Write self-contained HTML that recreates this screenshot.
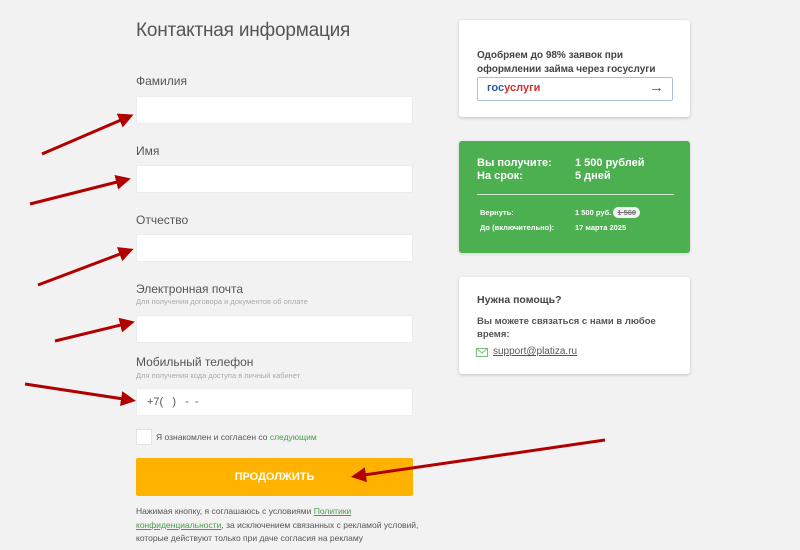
<!DOCTYPE html>
<html><head><meta charset="utf-8"><style>
*{margin:0;padding:0;box-sizing:border-box}
body{width:800px;height:550px;background:#f2f2f2;font-family:"Liberation Sans",sans-serif;color:#555;position:relative;overflow:hidden}
.a{position:absolute;white-space:nowrap}
.lbl{font-size:12px;color:#555}
.sub{font-size:7.5px;color:#aaa}
.in{position:absolute;left:136px;width:277px;height:28px;background:#fff;border:1px solid #ececec;border-radius:2px}
.card{position:absolute;left:459px;width:231px;background:#fff;border-radius:3px;box-shadow:0 1px 3px rgba(0,0,0,.2)}
</style></head><body>
<div class="a" style="left:136px;top:20px;font-size:19px;color:#555;letter-spacing:-0.2px">Контактная информация</div>
<div class="a lbl" style="left:136px;top:74px">Фамилия</div>
<div class="in" style="top:96px"></div>
<div class="a lbl" style="left:136px;top:144px">Имя</div>
<div class="in" style="top:165px"></div>
<div class="a lbl" style="left:136px;top:213px">Отчество</div>
<div class="in" style="top:234px"></div>
<div class="a lbl" style="left:136px;top:282px">Электронная почта</div>
<div class="a sub" style="left:136px;top:297px">Для получения договора и документов об оплате</div>
<div class="in" style="top:315px"></div>
<div class="a lbl" style="left:136px;top:355px">Мобильный телефон</div>
<div class="a sub" style="left:136px;top:371px">Для получения кода доступа в личный кабинет</div>
<div class="in" style="top:388px"></div>
<div class="a" style="left:147px;top:396px;font-size:11px;color:#555">+7(&nbsp;&nbsp;&nbsp;)&nbsp;&nbsp;&nbsp;-&nbsp;&nbsp;-</div>
<div class="a" style="left:136px;top:429px;width:16px;height:16px;background:#fff;border:1px solid #e4e4e4"></div>
<div class="a" style="left:156px;top:432px;font-size:8.5px;color:#555">Я ознакомлен и согласен со <span style="color:#4a9a4a">следующим</span></div>
<div class="a" style="left:136px;top:458px;width:277px;height:38px;background:#ffb300;border-radius:2px;color:#fff;font-weight:bold;font-size:11px;text-align:center;line-height:38px">ПРОДОЛЖИТЬ</div>
<div class="a" style="left:136px;top:505px;font-size:8.5px;line-height:13.5px;color:#555">Нажимая кнопку, я соглашаюсь с условиями <span style="color:#4a9a4a;text-decoration:underline">Политики</span><br><span style="color:#4a9a4a;text-decoration:underline">конфиденциальности</span>, за исключением связанных с рекламой условий,<br>которые действуют только при даче согласия на рекламу</div>

<div class="card" style="top:20px;height:97px">
<div class="a" style="left:18px;top:29px;font-size:10px;line-height:14px;color:#444;font-weight:bold">Одобряем до 98% заявок при<br>оформлении займа через госуслуги</div>
<div class="a" style="left:18px;top:57px;width:196px;height:24px;border:1px solid #a9bfdc;border-radius:2px">
<span class="a" style="left:9px;top:4px;font-size:11px;font-weight:bold;color:#2c5aa0">гос<span style="color:#d32f2f">услуги</span></span>
<span class="a" style="right:8px;top:1px;font-size:15px;color:#2c5aa0">→</span></div>
</div>
<div class="card" style="top:141px;height:112px;background:#4caf50;color:#fff;box-shadow:0 1px 3px rgba(0,0,0,.15)">
<div class="a" style="left:18px;top:16px;font-size:11px;font-weight:bold;line-height:13px">Вы получите:<br>На срок:</div>
<div class="a" style="left:116px;top:16px;font-size:11px;font-weight:bold;line-height:13px">1 500 рублей<br>5 дней</div>
<div class="a" style="left:18px;top:53px;width:197px;height:1px;background:#cfe8cf"></div>
<div class="a" style="left:21px;top:64px;font-size:7.5px;font-weight:bold;line-height:15px">Вернуть:<br>До (включительно):</div>
<div class="a" style="left:116px;top:64px;font-size:7.5px;font-weight:bold;line-height:15px">1 500 руб. <span style="background:#f3f3f3;color:#777;border-radius:7px;padding:1px 4px;text-decoration:line-through">1 560</span><br>17 марта 2025</div>
</div>
<div class="card" style="top:277px;height:97px">
<div class="a" style="left:18px;top:17px;font-size:10.5px;font-weight:bold;color:#444">Нужна помощь?</div>
<div class="a" style="left:18px;top:38px;font-size:9.5px;line-height:13px;color:#555;font-weight:bold">Вы можете связаться с нами в любое<br>время:</div>
<svg class="a" style="left:17px;top:71px" width="12" height="9"><rect x=".5" y=".5" width="11" height="8" fill="none" stroke="#7bbf7b"/><path d="M.5 .5 6 5 11.5 .5" fill="none" stroke="#7bbf7b"/></svg>
<div class="a" style="left:34px;top:69px;font-size:10px;color:#555;text-decoration:underline">support@platiza.ru</div>
</div>

<svg class="a" style="left:0;top:0" width="800" height="550">
<defs><marker id="m" markerWidth="5" markerHeight="5" refX="3" refY="2.5" orient="auto"><path d="M0 0 5 2.5 0 5z" fill="#b10000"/></marker></defs>
<g stroke="#b10000" stroke-width="3" fill="none" marker-end="url(#m)">
<line x1="42" y1="154" x2="128" y2="117"/>
<line x1="30" y1="204" x2="125" y2="180"/>
<line x1="38" y1="285" x2="128" y2="251"/>
<line x1="55" y1="341" x2="129" y2="323"/>
<line x1="25" y1="384" x2="130" y2="400"/>
<line x1="605" y1="440" x2="357" y2="476"/>
</g></svg>
</body></html>
